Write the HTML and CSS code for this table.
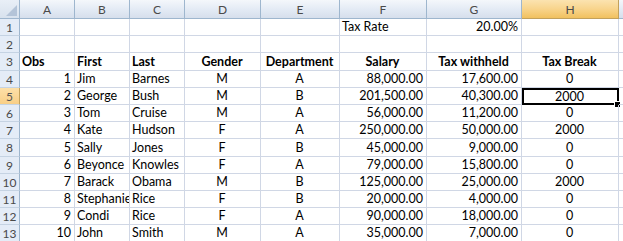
FILE: index.html
```html
<!DOCTYPE html>
<html>
<head>
<meta charset="utf-8">
<link rel="stylesheet" href="styles.css">
</head>
<body>
<div class="sheet">
  <div class="corner"><svg class="tri" width="11" height="11" viewBox="0 0 11 11"><polygon points="11,0 11,11 0,11" fill="#b4c4d8"/></svg></div>
  <div class="ch">A</div><div class="ch">B</div><div class="ch">C</div><div class="ch">D</div><div class="ch">E</div><div class="ch">F</div><div class="ch">G</div><div class="ch sel">H</div><div class="ch edge"></div>

  <div class="rh">1</div><div class="c"></div><div class="c"></div><div class="c"></div><div class="c"></div><div class="c"></div><div class="c l">Tax Rate</div><div class="c r">20.00%</div><div class="c"></div><div class="c"></div>
  <div class="rh">2</div><div class="c"></div><div class="c"></div><div class="c"></div><div class="c"></div><div class="c"></div><div class="c"></div><div class="c"></div><div class="c"></div><div class="c"></div>
  <div class="rh">3</div><div class="c l b">Obs</div><div class="c l b">First</div><div class="c l b">Last</div><div class="c m b">Gender</div><div class="c m b">Department</div><div class="c m b">Salary</div><div class="c m b">Tax withheld</div><div class="c m b">Tax Break</div><div class="c"></div>

  <div class="rh">4</div><div class="c r">1</div><div class="c l">Jim</div><div class="c l">Barnes</div><div class="c m">M</div><div class="c m">A</div><div class="c r">88,000.00</div><div class="c r">17,600.00</div><div class="c m">0</div><div class="c"></div>
  <div class="rh sel">5</div><div class="c r">2</div><div class="c l">George</div><div class="c l">Bush</div><div class="c m">M</div><div class="c m">B</div><div class="c r">201,500.00</div><div class="c r">40,300.00</div><div class="c m active">2000<span class="handle"></span></div><div class="c"></div>
  <div class="rh">6</div><div class="c r">3</div><div class="c l">Tom</div><div class="c l">Cruise</div><div class="c m">M</div><div class="c m">A</div><div class="c r">56,000.00</div><div class="c r">11,200.00</div><div class="c m">0</div><div class="c"></div>
  <div class="rh">7</div><div class="c r">4</div><div class="c l">Kate</div><div class="c l">Hudson</div><div class="c m">F</div><div class="c m">A</div><div class="c r">250,000.00</div><div class="c r">50,000.00</div><div class="c m">2000</div><div class="c"></div>
  <div class="rh">8</div><div class="c r">5</div><div class="c l">Sally</div><div class="c l">Jones</div><div class="c m">F</div><div class="c m">B</div><div class="c r">45,000.00</div><div class="c r">9,000.00</div><div class="c m">0</div><div class="c"></div>
  <div class="rh">9</div><div class="c r">6</div><div class="c l">Beyonce</div><div class="c l">Knowles</div><div class="c m">F</div><div class="c m">A</div><div class="c r">79,000.00</div><div class="c r">15,800.00</div><div class="c m">0</div><div class="c"></div>
  <div class="rh">10</div><div class="c r">7</div><div class="c l">Barack</div><div class="c l">Obama</div><div class="c m">M</div><div class="c m">B</div><div class="c r">125,000.00</div><div class="c r">25,000.00</div><div class="c m">2000</div><div class="c"></div>
  <div class="rh">11</div><div class="c r">8</div><div class="c l">Stephanie</div><div class="c l">Rice</div><div class="c m">F</div><div class="c m">B</div><div class="c r">20,000.00</div><div class="c r">4,000.00</div><div class="c m">0</div><div class="c"></div>
  <div class="rh">12</div><div class="c r">9</div><div class="c l">Condi</div><div class="c l">Rice</div><div class="c m">F</div><div class="c m">A</div><div class="c r">90,000.00</div><div class="c r">18,000.00</div><div class="c m">0</div><div class="c"></div>
  <div class="rh">13</div><div class="c r">10</div><div class="c l">John</div><div class="c l">Smith</div><div class="c m">M</div><div class="c m">A</div><div class="c r">35,000.00</div><div class="c r">7,000.00</div><div class="c m">0</div><div class="c"></div>
</div>
</body>
</html>
```
FILE: styles.css
```css
html, body {
  margin: 0;
  padding: 0;
  background: #ffffff;
  overflow: hidden;
}
.sheet {
  display: grid;
  grid-template-columns: 20px 55px 55px 55px 76px 79px 87px 95px 97px 10px;
  grid-template-rows: 19px repeat(13, 17.2px);
  width: 623px;
  height: 241px;
  overflow: hidden;
  font-family: Lato, "Open Sans", sans-serif;
  font-size: 12.5px;
  color: #000;
}
.sheet > div {
  box-sizing: border-box;
  overflow: hidden;
  white-space: nowrap;
  position: relative;
}
.corner {
  background: linear-gradient(#e9eff7, #d8e2ee);
  border-right: 1px solid #9eb6ce;
  border-bottom: 1px solid #9eb6ce;
}
.tri {
  position: absolute;
  right: 2px;
  bottom: 2px;
}
.ch {
  background: linear-gradient(#f4f7fb 0%, #e4ebf5 50%, #d6dfec 100%);
  border-right: 1px solid #9eb6ce;
  border-bottom: 1px solid #9eb6ce;
  color: #4a4a4a;
  display: flex;
  align-items: center;
  justify-content: center;
  font-size: 12px;
  padding-top: 1px;
}
.ch.sel {
  background: linear-gradient(#fbe3b0 0%, #f8d48c 50%, #f1c15f 100%);
  border-bottom-color: #c2a15c;
  border-right-color: #c2a15c;
}
.ch.edge {
  border-right: none;
}
.rh {
  background: #e4ecf7;
  border-right: 1px solid #9eb6ce;
  border-bottom: 1px solid #c5d3e3;
  color: #4a4a4a;
  font-size: 12px;
  display: flex;
  align-items: center;
  justify-content: center;
  padding-top: 1px;
}
.rh.sel {
  background: linear-gradient(#fde0a8, #f8cf87);
  border-right-color: #c2a15c;
  color: #555;
}
.c {
  border-right: 1px solid #d0d7e5;
  border-bottom: 1px solid #d0d7e5;
  display: flex;
  align-items: flex-end;
  padding: 0 3px 0 2px;
  line-height: 16px;
}
.l { justify-content: flex-start; }
.r { justify-content: flex-end; }
.m { justify-content: center; }
.b { font-weight: bold; }
.active {
  overflow: visible !important;
  outline: 2px solid #000;
  outline-offset: -2px;
  border-bottom: none;
}
.handle {
  position: absolute;
  right: -3px;
  bottom: -3px;
  width: 5px;
  height: 5px;
  background: #000;
  border: 1px solid #fff;
}
```
